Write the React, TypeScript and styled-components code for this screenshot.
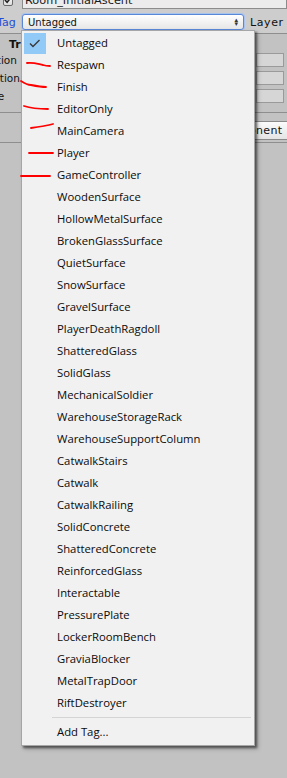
import React from "react";
import styled, { createGlobalStyle } from "styled-components";

const Global = createGlobalStyle`
  html, body { margin: 0; padding: 0; background: #c2c2c2; }
  body { width: 287px; height: 778px; overflow: hidden; }
  #root { position: relative; width: 287px; height: 778px; overflow: hidden; }
  * { box-sizing: border-box; }
`;

const Page = styled.div`
  position: relative;
  width: 287px;
  height: 778px;
  overflow: hidden;
  background: #c2c2c2;
  font-family: "DejaVu Sans", sans-serif;
  font-size: 10px;
  color: #111;
`;

const Header = styled.div`
  display: flex;
  flex-direction: column;
  gap: 5px;
  margin-top: -9px;
  padding-bottom: 3px;
  background: #cdcdcd;
  border-bottom: 1px solid #8e8e8e;
`;

const NameRow = styled.div`
  display: flex;
  align-items: center;
  height: 18px;
`;

const Toggle = styled.div`
  width: 10px;
  height: 11px;
  margin-left: 3px;
  margin-right: 9px;
  border: 1px solid #6a6a6a;
  border-radius: 2px;
  background: linear-gradient(#ffffff, #dcdcdc);
  display: flex;
  align-items: center;
  justify-content: center;
`;

const NameField = styled.div`
  flex: 1;
  height: 17px;
  border: 1px solid #8c8c8c;
  background: #ececec;
  padding-left: 2px;
  font-size: 11.3px;
  line-height: 16px;
  color: #1a1a1a;
  white-space: nowrap;
`;

const TagRow = styled.div`
  display: flex;
  align-items: center;
  height: 16px;
`;

const TagLabel = styled.div`
  width: 22px;
  margin-left: -3px;
  color: #1f4fd6;
  font-size: 11px;
  flex: none;
  white-space: nowrap;
`;

const Popup = styled.div`
  width: 222px;
  height: 16px;
  margin-left: 3px;
  border: 1px solid #5a86d8;
  border-radius: 3px;
  box-shadow: 0 0 0 1px #a9c3ef;
  background: linear-gradient(#ffffff, #e6e6e6);
  display: flex;
  align-items: center;
  justify-content: space-between;
  padding: 0 5px 0 5px;
  font-size: 10px;
  flex: none;
`;

const Arrows = styled.span`
  font-size: 7px;
  line-height: 7px;
  color: #333;
  display: flex;
  flex-direction: column;
  align-items: center;
`;

const LayerLabel = styled.div`
  margin-left: 6px;
  font-size: 11px;
  letter-spacing: 0.6px;
  white-space: nowrap;
`;

const Section = styled.div`
  display: flex;
  flex-direction: column;
  gap: 4px;
  padding: 5px 0 9px;
  border-bottom: 1px solid #8e8e8e;
`;

const SectionTitle = styled.div`
  height: 12px;
  line-height: 12px;
  margin-bottom: -2px;
  padding-left: 9px;
  font-weight: bold;
  font-size: 11px;
`;

const PropRow = styled.div`
  display: flex;
  align-items: center;
  justify-content: space-between;
  height: 14px;
`;

const PropLabel = styled.div`
  margin-left: -24px;
  font-size: 10.5px;
  white-space: nowrap;
`;

const NumField = styled.div`
  width: 28px;
  height: 14px;
  margin-right: 3px;
  border: 1px solid #9a9a9a;
  background: #d6d6d6;
`;

const ButtonBar = styled.div`
  display: flex;
  justify-content: flex-end;
  padding: 8px 0 2px;
  border-bottom: 1px solid #8e8e8e;
`;

const AddButton = styled.div`
  width: 114px;
  height: 19px;
  margin-right: -6px;
  border: 1px solid #8a8a8a;
  border-radius: 3px;
  background: linear-gradient(#fbfbfb, #e4e4e4);
  text-align: center;
  line-height: 17px;
  font-size: 11px;
  letter-spacing: 0.3px;
`;

const Menu = styled.div`
  position: absolute;
  left: 21px;
  top: 30px;
  width: 234px;
  padding: 1px 0 2px;
  background: #f1f1f1;
  border: 1px solid #a6a6a6;
  box-shadow: 2px 2px 2px rgba(0, 0, 0, 0.45), 3px 3px 4px rgba(0, 0, 0, 0.25);
  font-family: "Open Sans", "Noto Sans", sans-serif;
  font-size: 11.3px;
  color: #0a0a0a;
  z-index: 2;
`;

const Item = styled.div`
  display: flex;
  align-items: center;
  height: 22px;
`;

const CheckCell = styled.div<{ $on?: boolean }>`
  width: 22px;
  height: 21px;
  margin-left: 2px;
  margin-right: 11px;
  background: ${(p) => (p.$on ? "#91c9f7" : "transparent")};
  display: flex;
  align-items: center;
  justify-content: center;
  flex: none;
`;

const ItemText = styled.span`
  white-space: nowrap;
  padding-bottom: 2px;
`;

const Separator = styled.div`
  height: 7px;
  display: flex;
  align-items: center;
  padding-left: 30px;
  padding-right: 3px;
  &::after {
    content: "";
    flex: 1;
    height: 1px;
    background: #d4d4d4;
  }
`;

const Marks = styled.svg`
  position: absolute;
  left: 0;
  top: 0;
  z-index: 3;
  pointer-events: none;
`;

const tags = [
  "Untagged",
  "Respawn",
  "Finish",
  "EditorOnly",
  "MainCamera",
  "Player",
  "GameController",
  "WoodenSurface",
  "HollowMetalSurface",
  "BrokenGlassSurface",
  "QuietSurface",
  "SnowSurface",
  "GravelSurface",
  "PlayerDeathRagdoll",
  "ShatteredGlass",
  "SolidGlass",
  "MechanicalSoldier",
  "WarehouseStorageRack",
  "WarehouseSupportColumn",
  "CatwalkStairs",
  "Catwalk",
  "CatwalkRailing",
  "SolidConcrete",
  "ShatteredConcrete",
  "ReinforcedGlass",
  "Interactable",
  "PressurePlate",
  "LockerRoomBench",
  "GraviaBlocker",
  "MetalTrapDoor",
  "RiftDestroyer",
];

export default function App() {
  return (
    <Page>
      <Global />
      <Header>
        <NameRow>
          <Toggle>
            <svg width="9" height="8" viewBox="0 0 9 8">
              <path d="M1 4 L3.5 6.5 L8 1" fill="none" stroke="#222" strokeWidth="1.8" />
            </svg>
          </Toggle>
          <NameField>Room_InitialAscent</NameField>
        </NameRow>
        <TagRow>
          <TagLabel>Tag</TagLabel>
          <Popup>
            <span>Untagged</span>
            <Arrows>
              <span>▴</span>
              <span style={{ marginTop: -3 }}>▾</span>
            </Arrows>
          </Popup>
          <LayerLabel>Layer</LayerLabel>
        </TagRow>
      </Header>
      <Section>
        <SectionTitle>Transform</SectionTitle>
        <PropRow>
          <PropLabel>Position</PropLabel>
          <NumField />
        </PropRow>
        <PropRow>
          <PropLabel>Rotation</PropLabel>
          <NumField />
        </PropRow>
        <PropRow>
          <PropLabel>Scale</PropLabel>
          <NumField />
        </PropRow>
      </Section>
      <ButtonBar>
        <AddButton>Add Component</AddButton>
      </ButtonBar>

      <Menu>
        {tags.map((t, i) => (
          <Item key={t}>
            <CheckCell $on={i === 0}>
              {i === 0 && (
                <svg width="12" height="9" viewBox="0 0 12 9">
                  <path d="M1 4.5 L4 7.5 L10.5 1" fill="none" stroke="#3a3a3a" strokeWidth="1.4" />
                </svg>
              )}
            </CheckCell>
            <ItemText>{t}</ItemText>
          </Item>
        ))}
        <Separator />
        <Item>
          <CheckCell />
          <ItemText>Add Tag...</ItemText>
        </Item>
      </Menu>

      <Marks width="287" height="778" viewBox="0 0 287 778">
        <g fill="none" stroke="#ff0000" strokeWidth="1.8" strokeLinecap="round">
          <path d="M27 63 C33 62 38 64 43 65 C46 66 48 66 50 66" />
          <path d="M21 81 C24 83 27 85 31 85 C36 86 41 87 46 87" />
          <path d="M24 106 C30 108 38 109 48 109" />
          <path d="M31 128 C38 127 45 126 49 125 L53 124" />
          <path d="M29 153 L53 153" />
          <path d="M21 176 L50 176" />
        </g>
      </Marks>
    </Page>
  );
}
